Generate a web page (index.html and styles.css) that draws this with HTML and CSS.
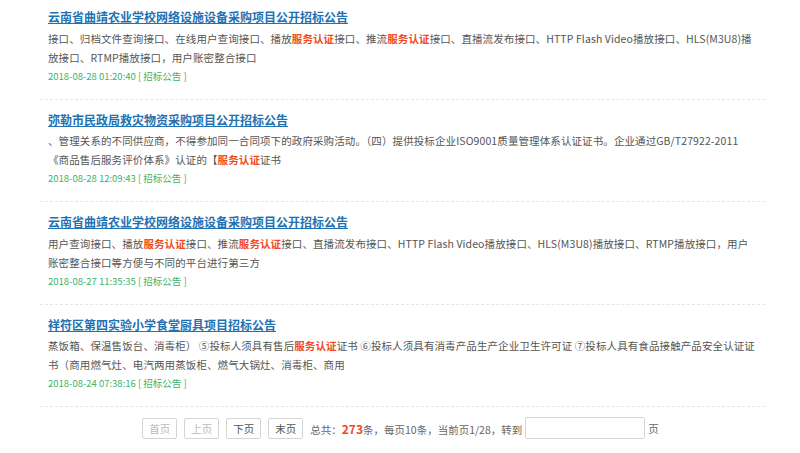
FILE: index.html
```html
<!DOCTYPE html>
<html lang="zh-CN">
<head>
  <meta charset="UTF-8">
  <title>招标公告列表</title>
  <link rel="stylesheet" href="styles.css">
</head>
<body>
  <div class="list">
    <div class="item">
      <a class="title" href="#">云南省曲靖农业学校网络设施设备采购项目公开招标公告</a>
      <p class="desc">接口、归档文件查询接口、在线用户查询接口、播放<em>服务认证</em>接口、推流<em>服务认证</em>接口、直播流发布接口、HTTP Flash Video播放接口、HLS(M3U8)播放接口、RTMP播放接口，用户账密整合接口</p>
      <div class="meta">2018-08-28 01:20:40 [ 招标公告 ]</div>
    </div>

    <div class="item">
      <a class="title" href="#">弥勒市民政局救灾物资采购项目公开招标公告</a>
      <p class="desc">、管理关系的不同供应商，不得参加同一合同项下的政府采购活动。（四）提供投标企业ISO9001质量管理体系认证证书。企业通过GB/T27922-2011《商品售后服务评价体系》认证的【<em>服务认证</em>证书</p>
      <div class="meta">2018-08-28 12:09:43 [ 招标公告 ]</div>
    </div>

    <div class="item">
      <a class="title" href="#">云南省曲靖农业学校网络设施设备采购项目公开招标公告</a>
      <p class="desc">用户查询接口、播放<em>服务认证</em>接口、推流<em>服务认证</em>接口、直播流发布接口、HTTP Flash Video播放接口、HLS(M3U8)播放接口、RTMP播放接口，用户账密整合接口等方便与不同的平台进行第三方</p>
      <div class="meta">2018-08-27 11:35:35 [ 招标公告 ]</div>
    </div>

    <div class="item">
      <a class="title" href="#">祥符区第四实验小学食堂厨具项目招标公告</a>
      <p class="desc">蒸饭箱、保温售饭台、消毒柜） ⑤投标人须具有售后<em>服务认证</em>证书 ⑥投标人须具有消毒产品生产企业卫生许可证 ⑦投标人具有食品接触产品安全认证证书（商用燃气灶、电汽两用蒸饭柜、燃气大锅灶、消毒柜、商用</p>
      <div class="meta">2018-08-24 07:38:16 [ 招标公告 ]</div>
    </div>

    <div class="pager">
      <a class="btn disabled" href="#">首页</a>
      <a class="btn disabled" href="#">上页</a>
      <a class="btn" href="#">下页</a>
      <a class="btn" href="#">末页</a>
      <span class="info">总共：<b>273</b>条，每页10条，当前页1/28，转到</span>
      <input type="text" class="goto">
      <span class="info">页</span>
    </div>
  </div>
</body>
</html>
```

FILE: styles.css
```css
body { margin: 0; background: #fff; font-family: "Noto Sans CJK SC", "Noto Sans", sans-serif; color: #555; }
.list { width: 725px; margin-left: 40px; }
.item { padding: 10px 9px 13px 8px; border-bottom: 1px dashed #e6e6e6; }
.item:first-child { padding-top: 7px; }
.title { display: block; font-size: 12px; line-height: 20px; font-weight: bold; color: #2271b3; text-decoration: underline; }
.desc { margin: 1.5px 0 0; font-size: 10.5px; line-height: 19px; letter-spacing: 0.1px; color: #555; }
.desc em { font-style: normal; font-weight: bold; color: #f24a1e; }
.meta { font-size: 9.5px; line-height: 19px; color: #3bb36c; }
.pager { display: flex; align-items: center; justify-content: center; gap: 7px; padding: 10px 4px 0 0; font-size: 10.5px; }
.btn { width: 35px; height: 21px; box-sizing: border-box; border: 1px solid #d4d4d4; border-radius: 2px; display: flex; align-items: center; justify-content: center; color: #555; text-decoration: none; }
.btn.disabled { color: #bbb; }
.info { color: #666; }
.info b { color: #f24a1e; font-size: 12px; }
.goto { width: 120px; height: 22px; box-sizing: border-box; border: 1px solid #d4d4d4; border-radius: 2px; margin: 0 -4px; padding: 0 4px; }
```
